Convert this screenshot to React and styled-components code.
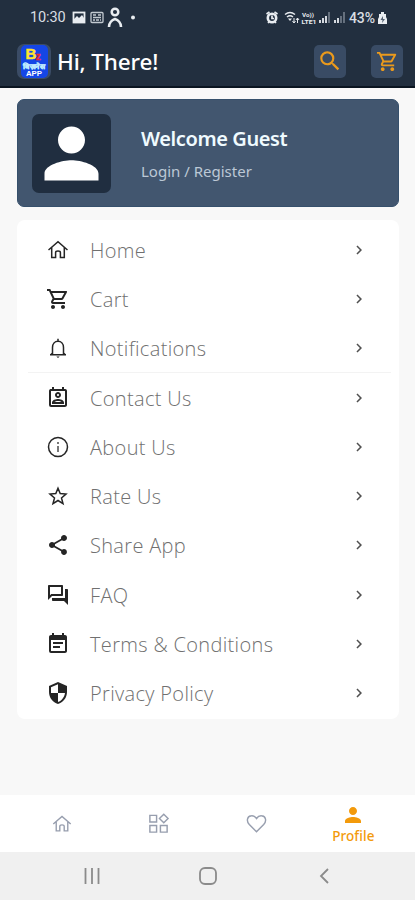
import React from "react";
import styled, { createGlobalStyle } from "styled-components";
import {
  MdOutlineShoppingCart, MdOutlinePermContactCalendar, MdShare, MdOutlineForum,
  MdEventNote, MdSecurity, MdChevronRight, MdSearch, MdPerson,
} from "react-icons/md";

const Global = createGlobalStyle`
  * { box-sizing: border-box; }
  body { margin: 0; background: #f8f8f8; font-family: "Open Sans", "Noto Sans", sans-serif; }
  svg { display: block; flex: none; }
`;
const Screen = styled.div`
  width: 415px; height: 900px; display: flex; flex-direction: column; background: #f8f8f8; overflow: hidden;
`;
const Header = styled.header`
  height: 88px; flex: none; background: #222f3f; border-bottom: 2px solid #0b1521;
`;
const StatusBar = styled.div`
  height: 35px; padding: 0 28px 0 30px; display: flex; align-items: center; justify-content: space-between;
  color: #d9dee3; font: 400 14px Roboto, sans-serif;
`;
const StatusGroup = styled.div`display: flex; align-items: center;`;
const Clock = styled.span`width: 42px; font-size: 14.5px; letter-spacing: -0.1px;`;
const Battery = styled.span`width: 29px; font-size: 14px; font-weight: 500; letter-spacing: -0.1px;`;
const TitleBar = styled.div`height: 52px; display: flex; align-items: center; padding: 0 12px 0 17px;`;
const Title = styled.h1`
  margin: 0 auto 0 6px; padding-top: 2px; font: 500 22.5px/32px "Noto Sans", sans-serif; color: #fff;
  letter-spacing: -0.15px; white-space: nowrap;
`;
const IconButton = styled.button`
  width: 32px; height: 33px; margin-left: 25px; padding: 0; border: 0; border-radius: 5px; background: #394b64;
  color: #eb9a1c; display: flex; align-items: center; justify-content: center;
`;
const Main = styled.main`flex: 1; padding: 11px 16px 0 17px;`;
const GuestCard = styled.section`
  height: 108px; border-radius: 7px; background: #42566f; border: 1px solid #36506c;
  display: flex; align-items: center; padding-left: 14px;
`;
const Avatar = styled.div`
  width: 79px; height: 79px; border-radius: 7px; background: #202e40; color: #fff;
  display: flex; align-items: center; justify-content: center;
`;
const GuestText = styled.div`margin-left: 30px; padding-top: 1px;`;
const Welcome = styled.div`
  font: 600 20px/28px "Noto Sans", sans-serif; letter-spacing: -0.4px; color: #f0fbff; white-space: nowrap;
`;
const Login = styled.div`margin-top: 7px; font: 400 15px/22px "Noto Sans", sans-serif; color: #bcc8d6; white-space: nowrap;`;
const Menu = styled.nav`margin-top: 13px; height: 499px; padding: 5px 8px 0 11px; border-radius: 8px; background: #fff;`;
const MenuRow = styled.div`
  height: 49.3px; display: flex; align-items: center; padding: 1px 23px 0 18px;
  color: #252525; border-bottom: 1px solid ${(p) => (p.$divided ? "#f3f3f3" : "transparent")};
`;
const MenuLabel = styled.span`
  flex: 1; margin-left: 20px; padding-top: 2px; color: #707070; font-size: 20px; font-weight: 300; line-height: 28px;
  letter-spacing: 0.33px; white-space: nowrap;
`;
const Chevron = styled(MdChevronRight)`color: #505050;`;
const TabBar = styled.nav`height: 57px; background: #fff; display: flex; padding: 0 13px; flex: none;`;
const Tab = styled.div`
  flex: 1; display: flex; flex-direction: column; align-items: center; justify-content: center;
  color: ${(p) => (p.$active ? "#f39a0b" : "#979eae")};
`;
const TabLabel = styled.span`font: 500 13.5px/16px "Noto Sans", sans-serif; margin-top: 1px; letter-spacing: 0.1px;`;
const SystemBar = styled.div`
  height: 48px; background: #f0f0f0; display: flex; align-items: center; justify-content: space-between; padding: 0 80px; flex: none;
`;

const Logo = () => (
  <svg width="34" height="35" viewBox="0 0 34 35">
    <rect width="34" height="35" rx="7" fill="#3b4c66" />
    <rect x="4" y="1" width="27" height="33" rx="5" fill="#1546e6" />
    <g fontFamily="Liberation Sans, sans-serif" fontWeight="700">
      <text x="8.500" y="14.500" fontSize="15" fill="#ffe52e" stroke="#ffe52e" strokeWidth="0.500">B</text>
      <text x="18.800" y="16" fontSize="10" fill="#ed2932" stroke="#ed2932" strokeWidth="0.500">z</text>
      <text x="17" y="24.500" fontSize="7" fill="#bfe9ff" stroke="#bfe9ff" strokeWidth="0.400" textAnchor="middle" textLength="22" lengthAdjust="spacingAndGlyphs">बिज़नेस</text>
      <text x="17" y="31.500" fontSize="7" fill="#fff" textAnchor="middle" textLength="16" lengthAdjust="spacingAndGlyphs">APP</text>
    </g>
  </svg>
);
const LeftStatusIcons = () => (
  <svg width="66" height="24" viewBox="72 5 66 24" fill="none" stroke="#e9edf1">
    <rect x="73.500" y="11.500" width="11" height="10" strokeWidth="1.800" />
    <path d="M74 21v-3l3-3 2 2 3-3 2 3v4z" fill="#e9edf1" stroke="none" />
    <rect x="91" y="11.500" width="12" height="10" rx="1" strokeWidth="1.300" stroke="#c3cad1" />
    <path d="M93 14h3m2 0h3M93 16.500h8M93 19h2m1 0h3m1 0h1" strokeWidth="1.500" stroke="#c3cad1" />
    <circle cx="115" cy="11" r="3.300" strokeWidth="2.500" />
    <path d="M109 26c0-4 3-7 6-8 3 1 6 4 6 8" strokeWidth="2.600" />
    <circle cx="133" cy="16.500" r="2" fill="#e9edf1" stroke="none" />
  </svg>
);
const RightStatusIcons = () => (
  <svg width="84" height="22" viewBox="263 6 84 22" fill="none" stroke="#e9edf1">
    <circle cx="270" cy="17" r="4.200" strokeWidth="2.600" />
    <path d="M264.500 13l3-2m8 2l-3-2M266 22l1-1m7 1l-1-1M270 14.500v3h2" strokeWidth="1.700" />
    <path d="M283 13.500q5-4 10 0M285 16q3-2.500 6 0" strokeWidth="1.500" />
    <path d="M286 17.500h4l-2 2.500z" fill="#e9edf1" stroke="none" />
    <path d="M292 22v-5m-1.500 3l1.500 2 1.500-2m2 2v-5m-1.500 2l1.500-2 1.500 2" strokeWidth="1" />
    <g fill="#e9edf1" stroke="none" fontFamily="Roboto, sans-serif" fontWeight="700" fontSize="6">
      <text x="300" y="15.800" textLength="12" lengthAdjust="spacingAndGlyphs">Vo))</text>
      <text x="299.500" y="22.500" textLength="15" lengthAdjust="spacingAndGlyphs">LTE1</text>
    </g>
    <path d="M318 22v-3m3 3v-5m3 5v-7M333 22v-3m3 3v-5" strokeWidth="1.800" />
    <path d="M327 22V11M339 22v-7m3 7V11" stroke="#77818e" strokeWidth="1.600" />
  </svg>
);
const BatteryIcon = () => (
  <svg width="9" height="14" viewBox="0 0 9 14">
    <path d="M3 1h3v2h2v3l1 2v5H0V8l1-2V3h2z" fill="#e9edf1" />
    <path d="M5 5L2.500 9h2L4 12l3-4H5z" fill="#536071" />
  </svg>
);

const LineIcon = ({ size = 24, weight = 1.5, children }) => (
  <svg width={size} height={size} viewBox="0 0 24 24" fill="none" stroke="currentColor" strokeWidth={weight}>
    {children}
  </svg>
);
const HomeIcon = (props) => (
  <LineIcon {...props}>
    <path d="M2.500 12L12 3.700 21.500 12M5.700 9.500V19.500H9.600V14.500Q9.600 13 12 13Q14.400 13 14.400 14.500V19.500H18.300V9.500" />
  </LineIcon>
);
const BellIcon = (props) => (
  <LineIcon {...props}>
    <path d="M4 18.700H20M6.500 18V11.500C6.500 7.800 8.800 5.200 12 5.200S17.500 7.800 17.500 11.500V18M5 18.500L6.500 17M19 18.500L17.500 17M12 5V2.700" />
    <path d="M10.300 20.500h3.400L12 22z" fill="currentColor" stroke="none" />
  </LineIcon>
);
const InfoIcon = (props) => (
  <LineIcon {...props}>
    <circle cx="12" cy="12" r="9.500" />
    <path d="M12 7v2m0 2v6" stroke="#777" strokeWidth="2" />
  </LineIcon>
);
const StarIcon = (props) => (
  <LineIcon {...props}>
    <path d="M12 4.200L14.200 9.600 20 10 15.500 13.900 17 19.600 12 16.500 7 19.600 8.500 13.900 4 10 9.800 9.600Z" />
  </LineIcon>
);
const CategoriesIcon = (props) => (
  <LineIcon {...props}>
    <path d="M3 3.500h7v7H3zM3 14h7v7H3zM14 14h7v7h-7zM17.500 2.300l4.500 4.500-4.500 4.500L13 6.800z" />
  </LineIcon>
);
const HeartIcon = (props) => (
  <LineIcon {...props}>
    <path d="M12 20.500L4.500 13C1 9.300 2.400 4.200 6.800 4C9 3.800 10.700 5 12 6.800C13.300 5 15 3.800 17.200 4C21.600 4.200 23 9.300 19.500 13Z" />
  </LineIcon>
);
const RecentIcon = () => (
  <svg width="24" height="18" viewBox="0 0 24 18" fill="none" stroke="#8b8b8b" strokeWidth="1.800"><path d="M5.500 1v16M12 1v16M18.500 1v16" /></svg>
);
const HomeKeyIcon = () => (
  <svg width="22" height="20" viewBox="0 0 22 20" fill="none" stroke="#8b8b8b" strokeWidth="1.800"><rect x="2" y="2" width="16" height="16" rx="5" /></svg>
);
const BackIcon = () => (
  <svg width="22" height="18" viewBox="0 0 22 18" fill="none" stroke="#8b8b8b" strokeWidth="1.800"><path d="M15 2L8 9l7 7" /></svg>
);

const items = [
  ["Home", HomeIcon],
  ["Cart", MdOutlineShoppingCart],
  ["Notifications", BellIcon, true],
  ["Contact Us", MdOutlinePermContactCalendar],
  ["About Us", InfoIcon],
  ["Rate Us", StarIcon],
  ["Share App", MdShare],
  ["FAQ", MdOutlineForum],
  ["Terms & Conditions", MdEventNote],
  ["Privacy Policy", MdSecurity],
];

export default function App() {
  return (
    <Screen>
      <Global />
      <Header>
        <StatusBar>
          <StatusGroup><Clock>10:30</Clock><LeftStatusIcons /></StatusGroup>
          <StatusGroup><RightStatusIcons /><Battery>43%</Battery><BatteryIcon /></StatusGroup>
        </StatusBar>
        <TitleBar>
          <Logo />
          <Title>Hi, There!</Title>
          <IconButton aria-label="Search"><MdSearch size={26} /></IconButton>
          <IconButton aria-label="Cart"><MdOutlineShoppingCart size={23} /></IconButton>
        </TitleBar>
      </Header>
      <Main>
        <GuestCard>
          <Avatar><MdPerson size={81} /></Avatar>
          <GuestText><Welcome>Welcome Guest</Welcome><Login>Login / Register</Login></GuestText>
        </GuestCard>
        <Menu>
          {items.map(([label, Icon, divided]) => (
            <MenuRow key={label} $divided={divided}>
              <Icon size={24} />
              <MenuLabel>{label}</MenuLabel>
              <Chevron size={18} />
            </MenuRow>
          ))}
        </Menu>
      </Main>
      <TabBar>
        <Tab><HomeIcon size={22} /></Tab>
        <Tab><CategoriesIcon size={23} /></Tab>
        <Tab><HeartIcon size={23} /></Tab>
        <Tab $active><MdPerson size={24} /><TabLabel>Profile</TabLabel></Tab>
      </TabBar>
      <SystemBar><RecentIcon /><HomeKeyIcon /><BackIcon /></SystemBar>
    </Screen>
  );
}
